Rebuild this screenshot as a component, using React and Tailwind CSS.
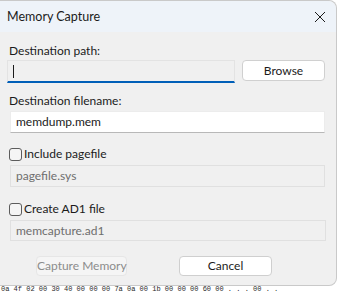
export default function App() {
  return (
    <div className="w-[338px] h-[292px] bg-white overflow-hidden font-['Lato',sans-serif] text-[12px] text-[#1b1b1b] whitespace-nowrap">
      <div className="w-[337px] h-[286px] bg-[#f0f0f0] border border-l-0 border-[#c9c9c9] rounded-tr-lg rounded-br-lg flex flex-col">
        <div className="h-[31px] bg-[#eef3f9] flex items-center justify-between pl-[7px] pr-[9px] rounded-tr-lg">
          <span className="leading-4 text-[12.5px]">Memory Capture</span>
          <svg width="12" height="12" viewBox="0 0 12 12" className="mr-[1px]">
            <path d="M1 1 L11 11 M11 1 L1 11" stroke="#1b1b1b" strokeWidth="1" fill="none" />
          </svg>
        </div>

        <div className="mt-[11px] ml-[9px] leading-4">Destination path:</div>
        <div className="mt-[1px] flex items-start">
          <div className="ml-[7px] w-[228px] h-[23px] bg-[#f0f0f0] border border-[#e3e3e3] border-b-2 border-b-[#005fb8] flex items-center pl-[5px]">
            <div className="w-px h-[13px] bg-[#1b1b1b]" />
          </div>
          <button className="ml-[7px] w-[83px] h-[21px] bg-white border border-[#d0d0d0] rounded-[4px] leading-4 text-[#1b1b1b]">
            Browse
          </button>
        </div>

        <div className="mt-[10px] ml-[9px] leading-4">Destination filename:</div>
        <div className="mt-[2px] ml-[10px] w-[315px] h-[22px] bg-white border border-[#ececec] border-b-[#b8b8b8] flex items-center pl-[5px] leading-4">
          memdump.mem
        </div>

        <div className="mt-[13px] ml-[9px] flex items-center h-4">
          <div className="w-[13px] h-[13px] border border-[#5c5c5c] rounded-[3px] bg-[#f5f5f5]" />
          <span className="ml-[2px] leading-4">Include pagefile</span>
        </div>
        <div className="mt-[3px] ml-[10px] w-[315px] h-[22px] bg-[#f0f0f0] border border-[#e0e0e0] flex items-center pl-[5px] leading-4 text-[#6e6e6e]">
          pagefile.sys
        </div>

        <div className="mt-[14px] ml-[9px] flex items-center h-4">
          <div className="w-[13px] h-[13px] border border-[#5c5c5c] rounded-[3px] bg-[#f5f5f5]" />
          <span className="ml-[2px] leading-4">Create AD1 file</span>
        </div>
        <div className="mt-[3px] ml-[10px] w-[316px] h-[21px] bg-[#f0f0f0] border border-[#e0e0e0] flex items-center pl-[5px] leading-4 text-[#6e6e6e]">
          memcapture.ad1
        </div>

        <div className="mt-[15px] flex">
          <button className="ml-[36px] w-[91px] h-[20px] bg-[#f5f5f5] border border-[#e6e6e6] rounded-[4px] leading-4 text-[#8c8c8c]">
            Capture Memory
          </button>
          <button className="ml-[52px] w-[93px] h-[20px] bg-white border border-[#cfcfcf] rounded-[4px] leading-4 text-[#1b1b1b]">
            Cancel
          </button>
        </div>
      </div>
      <div className="pl-[1px] font-['Liberation_Mono',monospace] text-[7px] leading-[6px] text-[#2a2a2a]">
        0a 4f 02 00 30 40 00 00 00 7a 0a 00 1b 00 00 00 60 00 . . . 00 . .
      </div>
    </div>
  );
}
